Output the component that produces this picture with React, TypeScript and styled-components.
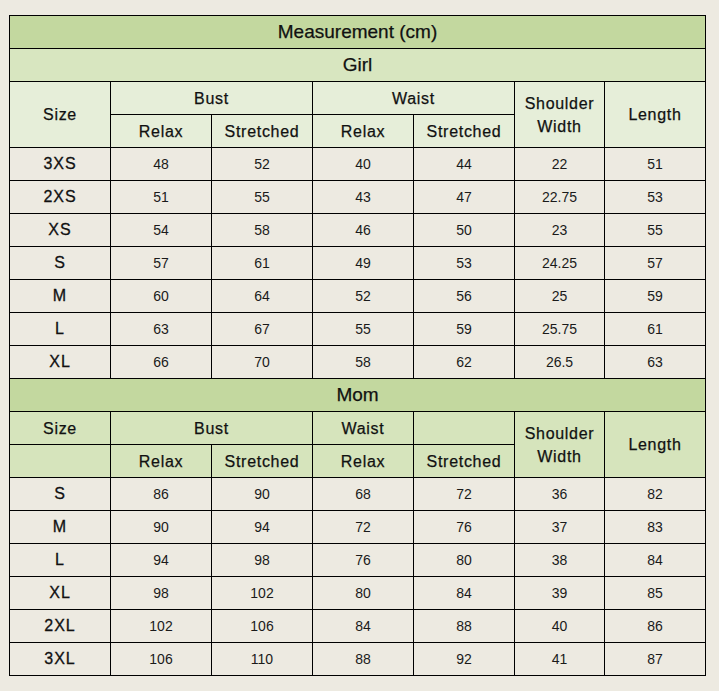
import React from "react";
import styled, { createGlobalStyle, css } from "styled-components";

const GlobalStyle = createGlobalStyle`
  html, body {
    margin: 0;
    padding: 0;
    background: #edeae1;
  }
  body {
    font-family: "Liberation Sans", Arial, sans-serif;
  }
`;

const Page = styled.div`
  padding: 15px 0 0 9px;
  min-height: 691px;
  box-sizing: border-box;
`;

const SizeTable = styled.div`
  display: inline-grid;
  grid-template-columns: 100px 100px 100px 100px 100px 89px 100px;
  grid-auto-rows: 32px;
  gap: 1px;
  padding: 1px;
  background: #000;
`;

type Tone = "title" | "section" | "light" | "mid";

const toneColor: Record<Tone, string> = {
  title: "#c3d89f",
  section: "#d8e6c0",
  light: "#e6eed9",
  mid: "#d6e4bc",
};

const TitleCell = styled.div<{ $tone: Tone }>`
  grid-column: 1 / -1;
  display: flex;
  align-items: center;
  justify-content: center;
  background: ${(p) => toneColor[p.$tone]};
  font-size: 19px;
  color: #111;
  -webkit-text-stroke: 0.25px #111;
`;

const HeadCell = styled.div<{ $tone: Tone; $cols?: number; $rows?: number }>`
  display: flex;
  align-items: center;
  justify-content: center;
  text-align: center;
  background: ${(p) => toneColor[p.$tone]};
  font-size: 16px;
  letter-spacing: 0.7px;
  line-height: 23px;
  color: #111;
  -webkit-text-stroke: 0.25px #111;
  ${(p) =>
    p.$cols &&
    css`
      grid-column: span ${p.$cols};
    `}
  ${(p) =>
    p.$rows &&
    css`
      grid-row: span ${p.$rows};
    `}
`;

const DataCell = styled.div<{ $label?: boolean }>`
  display: flex;
  align-items: center;
  justify-content: center;
  background: #edeae1;
  color: #1a1a1a;
  ${(p) =>
    p.$label
      ? css`
          font-size: 16px;
          letter-spacing: 1px;
          color: #111;
          -webkit-text-stroke: 0.3px #111;
        `
      : css`
          font-size: 14px;
        `}
`;

const girlRows: (string | number)[][] = [
  ["3XS", 48, 52, 40, 44, 22, 51],
  ["2XS", 51, 55, 43, 47, 22.75, 53],
  ["XS", 54, 58, 46, 50, 23, 55],
  ["S", 57, 61, 49, 53, 24.25, 57],
  ["M", 60, 64, 52, 56, 25, 59],
  ["L", 63, 67, 55, 59, 25.75, 61],
  ["XL", 66, 70, 58, 62, 26.5, 63],
];

const momRows: (string | number)[][] = [
  ["S", 86, 90, 68, 72, 36, 82],
  ["M", 90, 94, 72, 76, 37, 83],
  ["L", 94, 98, 76, 80, 38, 84],
  ["XL", 98, 102, 80, 84, 39, 85],
  ["2XL", 102, 106, 84, 88, 40, 86],
  ["3XL", 106, 110, 88, 92, 41, 87],
];

function DataRows({ rows, prefix }: { rows: (string | number)[][]; prefix: string }) {
  return (
    <>
      {rows.map((row, i) =>
        row.map((v, j) => (
          <DataCell key={`${prefix}-${i}-${j}`} $label={j === 0}>
            {v}
          </DataCell>
        ))
      )}
    </>
  );
}

export default function App() {
  return (
    <>
      <GlobalStyle />
      <Page>
        <SizeTable>
          <TitleCell $tone="title">Measurement (cm)</TitleCell>
          <TitleCell $tone="section">Girl</TitleCell>

          <HeadCell $tone="light" $rows={2}>Size</HeadCell>
          <HeadCell $tone="light" $cols={2}>Bust</HeadCell>
          <HeadCell $tone="light" $cols={2}>Waist</HeadCell>
          <HeadCell $tone="light" $rows={2}>
            Shoulder
            <br />
            Width
          </HeadCell>
          <HeadCell $tone="light" $rows={2}>Length</HeadCell>
          <HeadCell $tone="light">Relax</HeadCell>
          <HeadCell $tone="light">Stretched</HeadCell>
          <HeadCell $tone="light">Relax</HeadCell>
          <HeadCell $tone="light">Stretched</HeadCell>

          <DataRows rows={girlRows} prefix="g" />

          <TitleCell $tone="title">Mom</TitleCell>

          <HeadCell $tone="mid">Size</HeadCell>
          <HeadCell $tone="mid" $cols={2}>Bust</HeadCell>
          <HeadCell $tone="mid">Waist</HeadCell>
          <HeadCell $tone="mid" />
          <HeadCell $tone="mid" $rows={2}>
            Shoulder
            <br />
            Width
          </HeadCell>
          <HeadCell $tone="mid" $rows={2}>Length</HeadCell>
          <HeadCell $tone="mid" />
          <HeadCell $tone="mid">Relax</HeadCell>
          <HeadCell $tone="mid">Stretched</HeadCell>
          <HeadCell $tone="mid">Relax</HeadCell>
          <HeadCell $tone="mid">Stretched</HeadCell>

          <DataRows rows={momRows} prefix="m" />
        </SizeTable>
      </Page>
    </>
  );
}
